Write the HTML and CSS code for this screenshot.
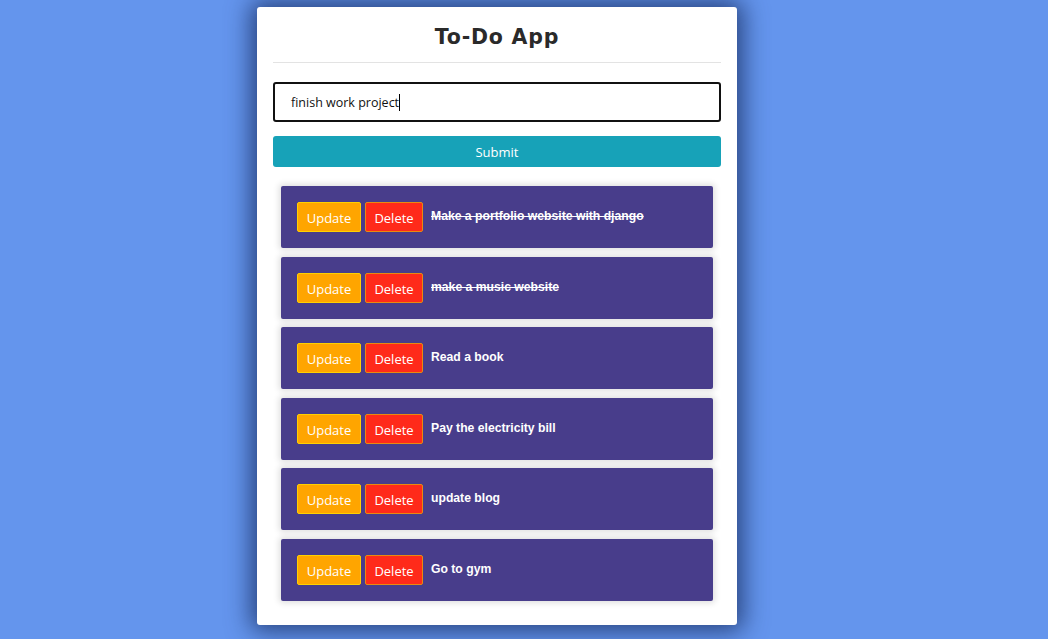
FILE: index.html
```html
<!DOCTYPE html>
<html>
<head>
<meta charset="utf-8">
<link rel="stylesheet" href="styles.css">
</head>
<body>
<div class="card">
  <h1 class="title">To-Do App</h1>
  <div class="form">
    <div class="input">finish work project<span class="caret"></span></div>
    <div class="submit">Submit</div>
  </div>
  <div class="list">
    <div class="item"><span class="btn upd">Update</span><span class="btn del">Delete</span><span class="task done">Make a portfolio website with django</span></div>
    <div class="item"><span class="btn upd">Update</span><span class="btn del">Delete</span><span class="task done">make a music website</span></div>
    <div class="item"><span class="btn upd">Update</span><span class="btn del">Delete</span><span class="task">Read a book</span></div>
    <div class="item"><span class="btn upd">Update</span><span class="btn del">Delete</span><span class="task">Pay the electricity bill</span></div>
    <div class="item"><span class="btn upd">Update</span><span class="btn del">Delete</span><span class="task">update blog</span></div>
    <div class="item"><span class="btn upd">Update</span><span class="btn del">Delete</span><span class="task">Go to gym</span></div>
  </div>
</div>
</body>
</html>
```
FILE: styles.css
```css
html, body { margin: 0; padding: 0; }
body {
  background: #6495ed;
  height: 639px;
  overflow: hidden;
  font-family: "Open Sans", sans-serif;
}
.card {
  width: 448px;
  margin: 7px 0 0 257px;
  background: #fff;
  padding: 0 16px 24px;
  border-radius: 3px;
  box-shadow: 0 0 24px 6px rgba(20, 40, 90, 0.75);
}
.title {
  margin: 0;
  height: 55px;
  line-height: 60px;
  text-align: center;
  font-family: "DejaVu Sans", sans-serif;
  font-weight: bold;
  font-size: 20.5px;
  letter-spacing: 0.8px;
  color: #2a2a2a;
  border-bottom: 1px solid #e3e3e3;
}
.form { padding-top: 19px; }
.input {
  height: 36px;
  border: 2px solid #111;
  border-radius: 3px;
  padding-left: 16px;
  line-height: 37px;
  font-size: 12.5px;
  color: #111;
}
.caret {
  display: inline-block;
  width: 1px;
  height: 17px;
  background: #000;
  vertical-align: -4px;
}
.submit {
  margin-top: 14px;
  height: 31px;
  line-height: 32px;
  background: #17a2b8;
  color: #fff;
  text-align: center;
  font-size: 13px;
  border-radius: 3px;
}
.list {
  padding: 19px 8px 0;
  display: flex;
  flex-direction: column;
  gap: 8.6px;
}
.item {
  height: 62px;
  box-sizing: border-box;
  background: #483d8b;
  border-radius: 2px;
  padding: 16px;
  display: flex;
  align-items: flex-start;
  box-shadow: 0 0 6px 2px rgba(0, 0, 0, 0.13);
}
.btn {
  height: 30px;
  box-sizing: border-box;
  line-height: 31px;
  font-size: 13px;
  color: #fff;
  border-radius: 2px;
  text-align: center;
}
.upd {
  width: 64px;
  background: #ffa500;
  border: 1px solid #ffd000;
}
.del {
  width: 58px;
  margin-left: 4px;
  background: #ff2a1a;
  border: 1px solid #e88a10;
}
.task {
  margin-left: 8px;
  margin-top: 7px;
  font-family: "Liberation Sans", sans-serif;
  font-weight: bold;
  font-size: 12.2px;
  color: #fff;
}
.done { text-decoration: line-through; }
```
